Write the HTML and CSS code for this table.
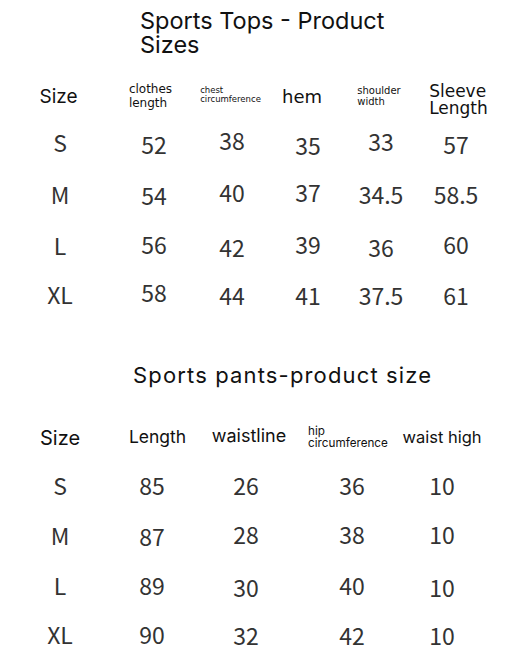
FILE: index.html
```html
<!DOCTYPE html>
<html>
<head>
<meta charset="utf-8">
<link rel="stylesheet" href="styles.css">
</head>
<body>
<h1 class="title title-tops">Sports Tops - Product<br>Sizes</h1>
<div class="chart chart-tops">
  <div class="hd hd-size t1-size">Size</div>
  <div class="hd hd-clothes">clothes<br>length</div>
  <div class="hd hd-chest">chest<br>circumference</div>
  <div class="hd hd-hem">hem</div>
  <div class="hd hd-shoulder">shoulder<br>width</div>
  <div class="hd hd-sleeve">Sleeve<br>Length</div>

  <div class="cell up1">S</div>
  <div class="cell dn1">52</div>
  <div class="cell up3">38</div>
  <div class="cell dn2">35</div>
  <div class="cell up2">33</div>
  <div class="cell dn1">57</div>

  <div class="cell dn1">M</div>
  <div class="cell dn2">54</div>
  <div class="cell up1">40</div>
  <div class="cell up1">37</div>
  <div class="cell dn1">34.5</div>
  <div class="cell dn1">58.5</div>

  <div class="cell dn2">L</div>
  <div class="cell dn1">56</div>
  <div class="cell dn4">42</div>
  <div class="cell dn1">39</div>
  <div class="cell dn4">36</div>
  <div class="cell dn1">60</div>

  <div class="cell dn1">XL</div>
  <div class="cell up1">58</div>
  <div class="cell dn2">44</div>
  <div class="cell dn2">41</div>
  <div class="cell dn2">37.5</div>
  <div class="cell dn2">61</div>
</div>

<h2 class="title title-pants">Sports pants-product size</h2>
<div class="chart chart-pants">
  <div class="hd hd-size t2-size">Size</div>
  <div class="hd hd-length">Length</div>
  <div class="hd hd-waistline">waistline</div>
  <div class="hd hd-hip">hip<br>circumference</div>
  <div class="hd hd-waisthigh">waist high</div>

  <div class="cell">S</div>
  <div class="cell">85</div>
  <div class="cell">26</div>
  <div class="cell">36</div>
  <div class="cell">10</div>

  <div class="cell">M</div>
  <div class="cell dn1">87</div>
  <div class="cell up1">28</div>
  <div class="cell up1">38</div>
  <div class="cell up1">10</div>

  <div class="cell">L</div>
  <div class="cell">89</div>
  <div class="cell dn2">30</div>
  <div class="cell">40</div>
  <div class="cell dn2">10</div>

  <div class="cell up1">XL</div>
  <div class="cell up1">90</div>
  <div class="cell">32</div>
  <div class="cell">42</div>
  <div class="cell">10</div>
</div>
</body>
</html>
```
FILE: styles.css
```css
html, body {
  margin: 0;
  padding: 0;
  background: #ffffff;
}

body {
  font-family: Inter, "Noto Sans", sans-serif;
  color: #111111;
  width: 526px;
  height: 660px;
  overflow: hidden;
}

.title {
  margin: 0;
  font-weight: 400;
  color: #111111;
}

.title-tops {
  font-size: 23.5px;
  line-height: 24px;
  padding: 9px 0 0 140px;
}

.title-pants {
  font-size: 22px;
  line-height: 26px;
  letter-spacing: 1.15px;
  padding-left: 133px;
  margin-top: 44px;
}

.chart {
  display: grid;
  justify-items: center;
  padding-left: 20px;
  grid-template-rows: 40px repeat(4, 50px);
}

.chart-tops {
  margin-top: 21px;
  grid-template-columns: 80px 108px 48px 104px 42px 108px;
}

.chart-pants {
  margin-top: 32px;
  grid-template-columns: 80px 104px 84px 128px 52px;
}

.hd {
  align-self: start;
  text-align: left;
  white-space: nowrap;
  color: #111111;
}

.hd-size {
  font-family: Inter, sans-serif;
  line-height: 1;
}

.t1-size {
  font-size: 19px;
  margin-top: 9px;
  margin-right: 3px;
}

.t2-size {
  font-size: 20px;
  margin-top: 8px;
}

.hd-clothes {
  font-family: "DejaVu Sans", sans-serif;
  font-size: 12px;
  line-height: 14px;
  margin-top: 4px;
  margin-right: 7px;
}

.hd-chest {
  font-family: "DejaVu Sans", sans-serif;
  font-size: 8.5px;
  line-height: 9px;
  margin-top: 8px;
  margin-right: 3px;
}

.hd-hem {
  font-family: "DejaVu Sans", sans-serif;
  font-size: 18px;
  line-height: 1;
  margin-top: 10px;
  margin-right: 12px;
}

.hd-shoulder {
  font-family: "DejaVu Sans", sans-serif;
  font-size: 10px;
  line-height: 11px;
  margin-top: 7px;
  margin-right: 4px;
}

.hd-sleeve {
  font-family: "DejaVu Sans", sans-serif;
  font-size: 17px;
  line-height: 17px;
  margin-top: 5px;
  margin-left: 5px;
}

.hd-length {
  font-size: 17.5px;
  line-height: 1;
  margin-top: 8px;
  margin-left: 11px;
}

.hd-waistline {
  font-size: 18px;
  line-height: 1;
  margin-top: 7px;
  margin-left: 6px;
}

.hd-hip {
  font-size: 11.7px;
  line-height: 12px;
  margin-top: 5px;
  margin-right: 8px;
}

.hd-waisthigh {
  font-size: 16.5px;
  line-height: 1;
  margin-top: 9px;
}

.cell {
  align-self: start;
  font-family: "Noto Sans CJK SC", "Noto Sans", sans-serif;
  font-size: 23px;
  line-height: 50px;
  color: #333333;
  white-space: nowrap;
}

.up3 { margin-top: -3px; }
.up2 { margin-top: -2px; }
.up1 { margin-top: -1px; }
.dn1 { margin-top: 1px; }
.dn2 { margin-top: 2px; }
.dn4 { margin-top: 4px; }
```
